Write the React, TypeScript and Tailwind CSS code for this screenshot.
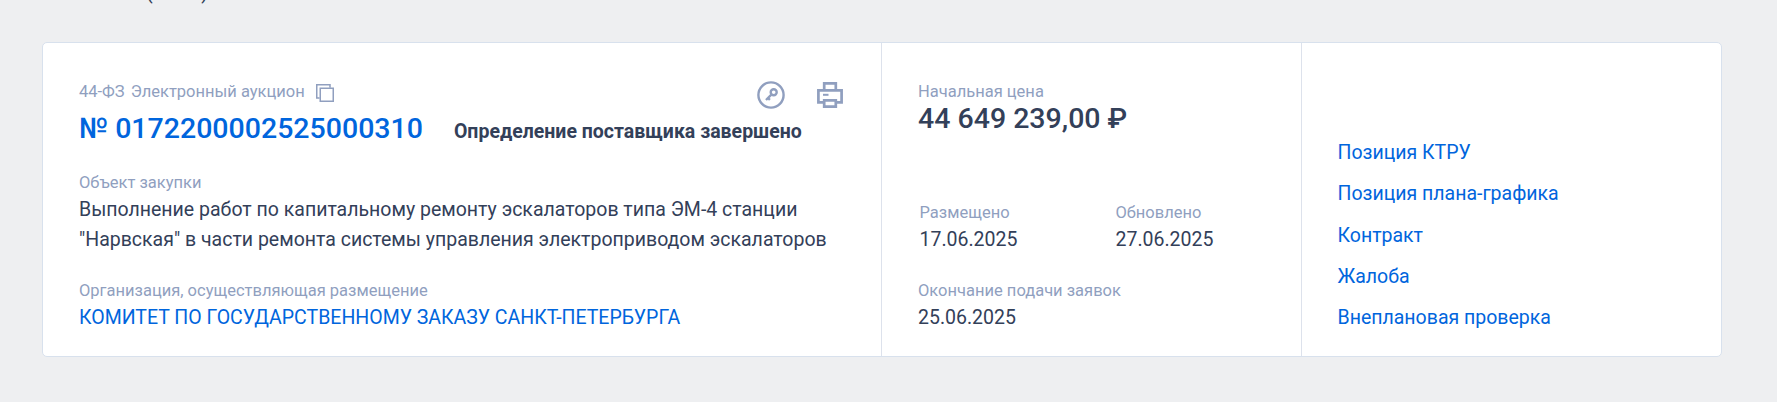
import type { ReactNode } from 'react';

const links = ['Позиция КТРУ', 'Позиция плана-графика', 'Контракт', 'Жалоба', 'Внеплановая проверка'];

function Label({ children }: { children: ReactNode }) {
  return <div className="h-6 text-[16.5px] leading-6 text-[#909fbf]">{children}</div>;
}

function CopyIcon() {
  return (
    <svg className="mt-1 h-[18px] w-[18px]" viewBox="0 0 18 18" fill="none" stroke="#909fbf" strokeWidth="1.5">
      <path d="M3.6 14H.75V.75H14v3" />
      <rect x="4.25" y="4.25" width="13" height="13" />
    </svg>
  );
}

function KeyIcon() {
  return (
    <svg className="h-7 w-7" viewBox="0 0 28 28" fill="none" stroke="#909fbf">
      <circle cx="14" cy="14" r="12.6" strokeWidth="2.4" />
      <circle cx="16.7" cy="11.3" r="3" strokeWidth="2.4" />
      <path d="M14.6 13.4L9 19M11 17l1.9 1.9" strokeWidth="2.4" />
    </svg>
  );
}

function PrintIcon() {
  return (
    <svg className="h-[26px] w-[26px]" viewBox="0 0 26 26" fill="none" stroke="#909fbf" strokeWidth="2.7">
      <path d="M7.2 8.2V1.4h11.6v6.8" />
      <path d="M7.2 20.3H1.4V8.4h23.2v11.9h-5.8" />
      <path d="M7.2 18.4h11.6v6.2H7.2z" />
      <path d="M6 12.8h5.5" strokeWidth="2" />
    </svg>
  );
}

export default function App() {
  return (
    <div className="h-[402px] w-[1777px] overflow-hidden bg-[#eeeff1] font-['Roboto','Liberation_Sans',sans-serif] text-[19.5px] text-[#334059]">
      <div className="flex h-[42px] items-start pl-[146px]">
        <span className="-mt-[19px] flex w-[62px] justify-between leading-6">
          <span>(</span>
          <span>)</span>
        </span>
      </div>

      <div className="ml-[42px] flex h-[315px] w-[1680px] rounded-[5px] border border-[#d8e1ed] bg-white">
        <div className="flex w-[839px] flex-col border-r border-[#dde2ec] pr-[38px] pl-9">
          <div className="flex h-[67px] items-start justify-between pt-[37px]">
            <div className="flex items-start gap-[11px]">
              <Label>
                44-ФЗ <span className="ml-0.5">Электронный аукцион</span>
              </Label>
              <CopyIcon />
            </div>
            <div className="mt-px flex items-center gap-8">
              <KeyIcon />
              <PrintIcon />
            </div>
          </div>
          <div className="flex h-[38px] items-baseline gap-[31px]">
            <a className="text-[28.5px] leading-[38px] font-medium text-[#0065dd]">№ 0172200002525000310</a>
            <span className="font-bold">Определение поставщика завершено</span>
          </div>
          <div className="mt-[23px]">
            <Label>Объект закупки</Label>
            <div className="leading-[30px] whitespace-nowrap">
              Выполнение работ по капитальному ремонту эскалаторов типа ЭМ-4 станции
              <br />
              "Нарвская" в части ремонта системы управления электроприводом эскалаторов
            </div>
          </div>
          <div className="mt-6">
            <Label>Организация, осуществляющая размещение</Label>
            <a className="block leading-[30px] text-[#0065dd]">КОМИТЕТ ПО ГОСУДАРСТВЕННОМУ ЗАКАЗУ САНКТ-ПЕТЕРБУРГА</a>
          </div>
        </div>

        <div className="w-[420px] border-r border-[#dde2ec] pt-[37px] pl-9">
          <Label>Начальная цена</Label>
          <div className="text-[28.5px] leading-[29px] font-medium">44 649 239,00 ₽</div>
          <div className="mt-[68px] grid grid-cols-[196px_1fr] pl-[1.5px]">
            <div>
              <Label>Размещено</Label>
              <div className="leading-[30px]">17.06.2025</div>
            </div>
            <div>
              <Label>Обновлено</Label>
              <div className="leading-[30px]">27.06.2025</div>
            </div>
          </div>
          <div className="mt-6">
            <Label>Окончание подачи заявок</Label>
            <div className="leading-[30px]">25.06.2025</div>
          </div>
        </div>

        <div className="flex flex-col gap-[11.25px] pt-[95px] pl-[35.5px] leading-[30px] text-[#0065dd]">
          {links.map((link) => (
            <a key={link}>{link}</a>
          ))}
        </div>
      </div>
    </div>
  );
}
